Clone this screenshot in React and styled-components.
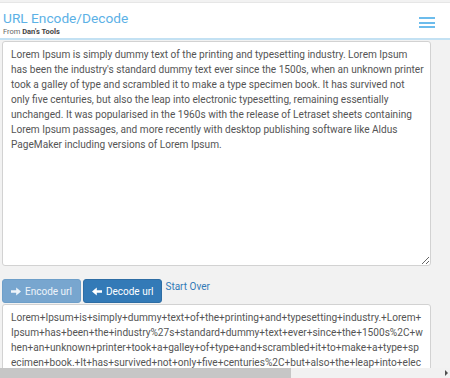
import React from 'react';
import styled, { createGlobalStyle } from 'styled-components';

const GlobalStyle = createGlobalStyle`
  html, body {
    overflow: hidden;
  }
  body {
    margin: 0;
    background-color: #f2f2f2;
    font-family: Roboto, "Liberation Sans", sans-serif;
  }
`;

const Header = styled.header`
  box-sizing: border-box;
  margin-top: 2px;
  height: 38px;
  padding: 0 3px;
  background-color: #fff;
  border-top: 1px solid #e6e6e6;
  border-bottom: 2px solid #c3e1f3;
  display: flex;
  justify-content: space-between;
  align-items: center;
`;

const Brand = styled.div`
  display: flex;
  flex-direction: column;
  padding-top: 5px;
`;

const Title = styled.h1`
  margin: 0;
  font-size: 13.7px;
  font-weight: 400;
  line-height: 17px;
  color: #5cb1e6;
`;

const Subtitle = styled.div`
  font-size: 7.5px;
  line-height: 10px;
  color: #666;
  b {
    color: #444;
  }
`;

const Burger = styled.button`
  width: 16px;
  height: 11px;
  margin: 4px 12px 0 0;
  padding: 0;
  border: none;
  background: none;
  display: flex;
  flex-direction: column;
  justify-content: space-between;
  span {
    display: block;
    height: 2px;
    background-color: #6cbcec;
  }
`;

const Main = styled.main`
  width: 429px;
  padding-left: 2px;
  padding-top: 1px;
`;

const Box = styled.textarea`
  display: block;
  width: 100%;
  height: ${p => p.$height}px;
  box-sizing: border-box;
  margin: 0;
  padding: 5px 0 5px 8px;
  border: 1px solid #d2d2d2;
  border-radius: 3px;
  background-color: #fff;
  font-family: Roboto, "Liberation Sans", sans-serif;
  font-size: 10.1px;
  line-height: 15px;
  color: #555;
  word-break: break-all;
  outline: none;
`;

const Actions = styled.div`
  display: flex;
  align-items: flex-start;
  gap: 2px;
  margin: 13px 0 1px;
`;

const Button = styled.button`
  height: 24px;
  padding: 0 8px;
  border-radius: 3px;
  border: 1px solid ${p => (p.disabled ? '#6e9fc9' : '#2e6da4')};
  background-color: ${p => (p.disabled ? '#78a6cf' : '#337ab7')};
  color: ${p => (p.disabled ? '#eef4fa' : '#fff')};
  font-family: Roboto, "Liberation Sans", sans-serif;
  font-size: 10px;
  display: flex;
  align-items: center;
  gap: 4px;
`;

const Link = styled.a`
  margin-left: 1px;
  font-size: 10px;
  line-height: 14px;
  color: #337ab7;
  text-decoration: none;
  padding-top: 1px;
`;

const ScrollBar = styled.div`
  position: fixed;
  left: 0;
  right: 0;
  bottom: 0;
  height: 10px;
  background-color: #f1f1f1;
  display: flex;
  align-items: center;
  justify-content: space-between;
`;

const Thumb = styled.div`
  width: 291px;
  height: 100%;
  background-color: #c6c6c6;
`;

const ScrollArrow = styled.div`
  width: 0;
  height: 0;
  margin-right: 2px;
  border-top: 3px solid transparent;
  border-bottom: 3px solid transparent;
  border-left: 3px solid #505050;
`;

const Arrow = ({ left }) => (
  <svg width="10" height="9" viewBox="0 0 10 9" style={{ transform: left ? 'scaleX(-1)' : 'none' }}>
    <path d="M0 3.2h5.2V0.4L10 4.5 5.2 8.6V5.8H0z" fill="currentColor" />
  </svg>
);

// wrapped the way the original page shows it
const inputLines = [
  'Lorem Ipsum is simply dummy text of the printing and typesetting industry. Lorem Ipsum',
  "has been the industry's standard dummy text ever since the 1500s, when an unknown printer",
  'took a galley of type and scrambled it to make a type specimen book. It has survived not',
  'only five centuries, but also the leap into electronic typesetting, remaining essentially',
  'unchanged. It was popularised in the 1960s with the release of Letraset sheets containing',
  'Lorem Ipsum passages, and more recently with desktop publishing software like Aldus',
  'PageMaker including versions of Lorem Ipsum.',
];

const encoded = encodeURIComponent(inputLines.join(' '))
  .replace(/%20/g, '+')
  .replace(/'/g, '%27');

// break the encoded string at the same columns as the screenshot
const cuts = [81, 77, 79, 83];
const outputLines = [];
let rest = encoded;
cuts.forEach(n => {
  outputLines.push(rest.slice(0, n));
  rest = rest.slice(n);
});
outputLines.push(rest);

const App = () => (
  <>
    <GlobalStyle />
    <Header>
      <Brand>
        <Title>URL Encode/Decode</Title>
        <Subtitle>
          From <b>Dan's Tools</b>
        </Subtitle>
      </Brand>
      <Burger aria-label="menu">
        <span />
        <span />
        <span />
      </Burger>
    </Header>
    <Main>
      <Box $height={225} defaultValue={inputLines.join('\n')} />
      <Actions>
        <Button disabled>
          <Arrow /> Encode url
        </Button>
        <Button>
          <Arrow left /> Decode url
        </Button>
        <Link href="#">Start Over</Link>
      </Actions>
      <Box $height={225} defaultValue={outputLines.join('\n')} />
    </Main>
    <ScrollBar>
      <Thumb />
      <ScrollArrow />
    </ScrollBar>
  </>
);

export default App;
